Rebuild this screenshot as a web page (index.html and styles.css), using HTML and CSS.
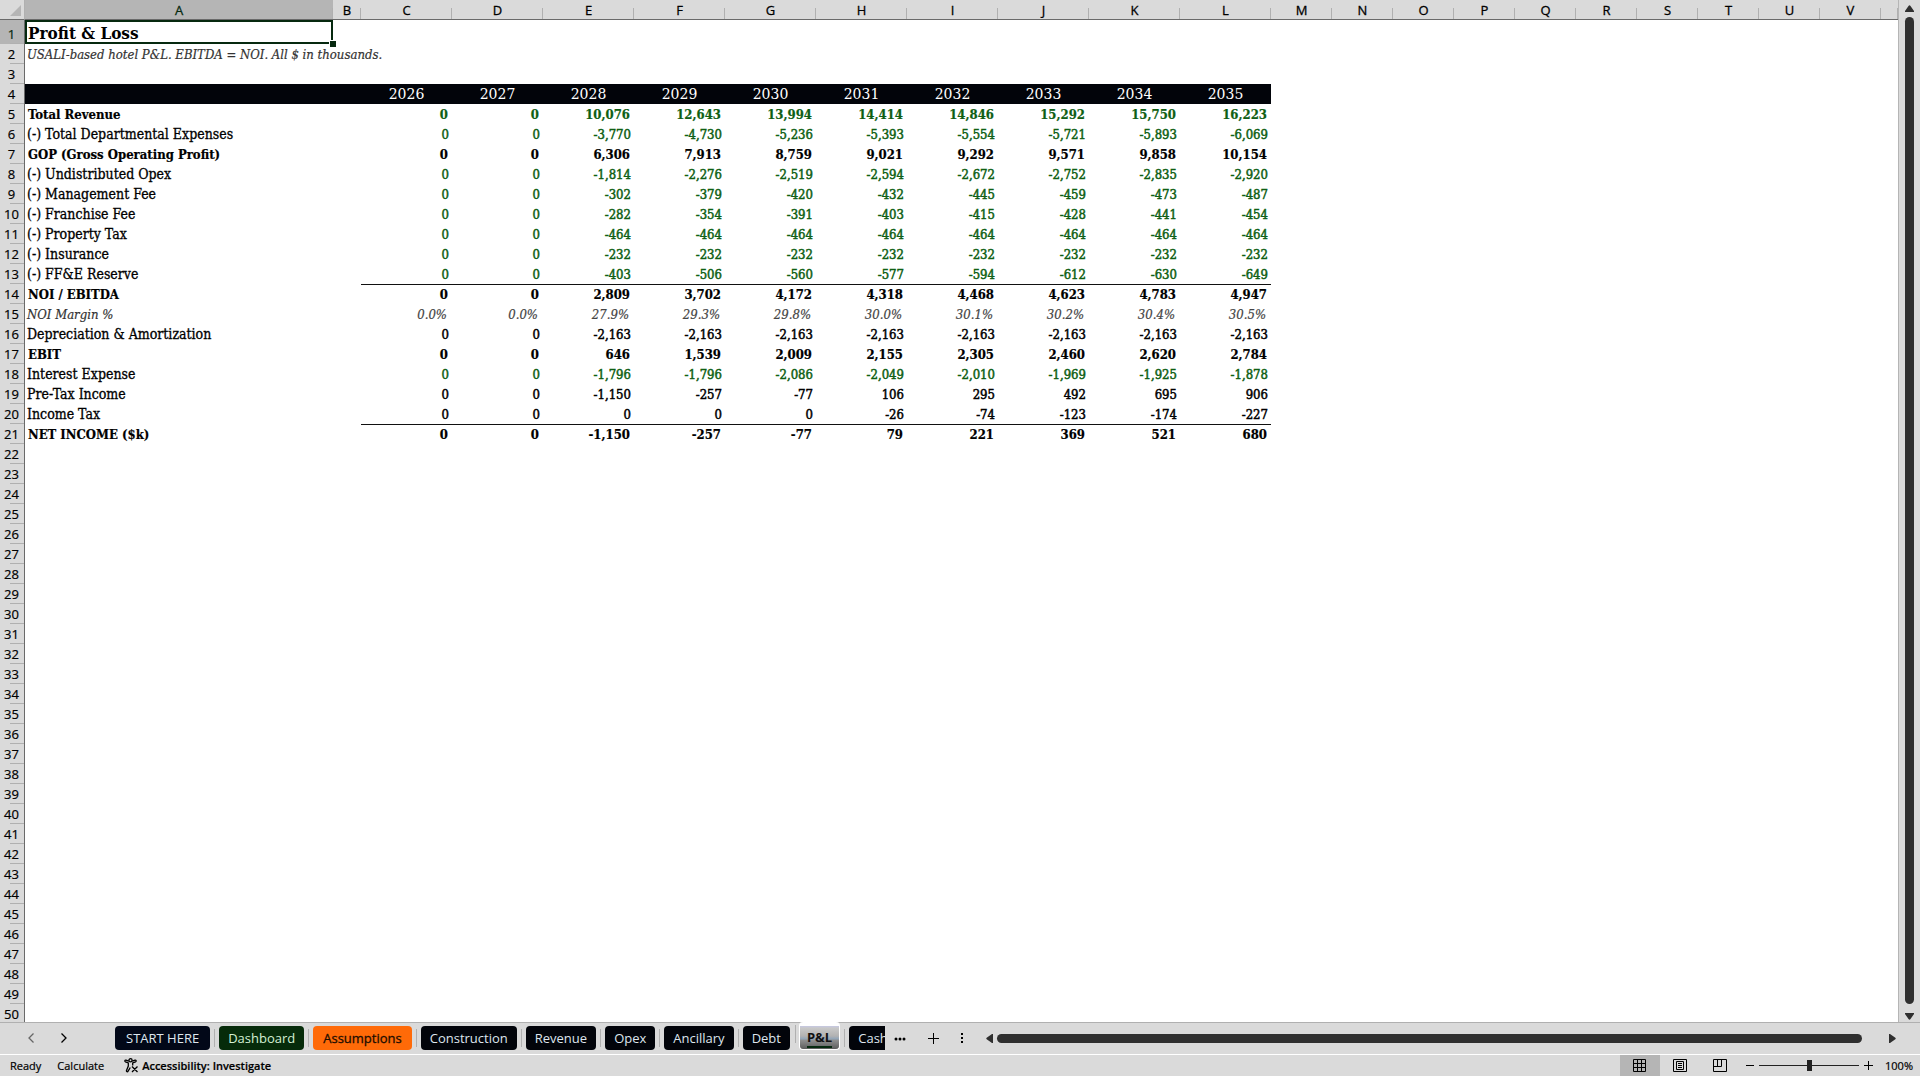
FILE: index.html
```
<!DOCTYPE html>
<html lang="en">
<head>
    <meta charset="UTF-8">
    <title>Profit &amp; Loss</title>
    <link rel="stylesheet" href="styles.css">
</head>
<body>

    <!-- Sheet -->
    <main class="workspace">
        <div class="sheet">
            <table class="grid">
                <colgroup id="cols"></colgroup>
                <thead><tr id="letters"></tr></thead>
                <tbody id="rows"></tbody>
            </table>
        </div>
        <div class="vscroll">
            <svg class="arrow" width="9" height="7" viewBox="0 0 9 7"><path d="M3.500 1q1-1.500 2 0L9 6v1H0V6z"/></svg>
            <div class="vthumb"></div>
            <svg class="arrow" width="9" height="7" viewBox="0 0 9 7"><path d="M0 0h9v1L5.500 6q-1 1.500-2 0L0 1z"/></svg>
        </div>
    </main>

    <!-- Sheet tabs -->
    <nav class="tabbar">
        <div class="tab-arrows">
            <button class="plain dim" aria-label="Previous sheet"><svg width="8" height="12" viewBox="0 0 8 12"><path class="line" d="M6.500 1.500 2 6l4.500 4.500"/></svg></button>
            <button class="plain" aria-label="Next sheet"><svg width="8" height="12" viewBox="0 0 8 12"><path class="line" d="M1.500 1.500 6 6l-4.500 4.500"/></svg></button>
        </div>
        <div class="tabs">
            <button class="tab navy">START HERE</button>
            <button class="tab green">Dashboard</button>
            <button class="tab orange">Assumptions</button>
            <button class="tab">Construction</button>
            <button class="tab">Revenue</button>
            <button class="tab">Opex</button>
            <button class="tab">Ancillary</button>
            <button class="tab">Debt</button>
            <button class="tab active"><span>P&amp;L</span></button>
            <button class="tab">Cash</button>
        </div>
        <div class="tab-tools">
            <button class="plain" aria-label="More sheets"><svg width="12" height="4" viewBox="0 0 12 4"><circle cx="2" cy="2" r="1.500"/><circle cx="6" cy="2" r="1.500"/><circle cx="10" cy="2" r="1.500"/></svg></button>
            <button class="plain" aria-label="New sheet"><svg width="11" height="11" viewBox="0 0 11 11"><path d="M5 0h1v5h5v1H6v5H5V6H0V5h5z"/></svg></button>
            <button class="plain" aria-label="Resize tabs"><svg width="3" height="11" viewBox="0 0 3 11"><path d="M0 0h2v2H0zM0 4h2v2H0zM0 8h2v2H0z"/></svg></button>
        </div>
        <div class="hscroll">
            <svg class="arrow" width="7" height="9" viewBox="0 0 7 9"><path d="M7 0v9H6L1 5.500q-1.500-1 0-2L6 0z"/></svg>
            <div class="hthumb"></div>
            <svg class="arrow" width="7" height="9" viewBox="0 0 7 9"><path d="M0 0h1l5 3.500q1.500 1 0 2L1 9H0z"/></svg>
        </div>
    </nav>

    <!-- Status bar -->
    <footer class="status">
        <span class="state">Ready</span>
        <span class="state">Calculate</span>
        <button class="plain access">
            <svg width="15" height="15" viewBox="0 0 15 15"><circle class="line" cx="6.500" cy="2.300" r="1.600"/><path class="line" d="M4.800 3.200 2 2.200C.8 1.900.4 3.400 1.500 3.900L4.300 5v3L2.500 12.500c-.3 1.300 1 1.700 1.600.7L6.300 9.500M8.200 3.200 11 2.200c1.200-.3 1.600 1.200.5 1.700L8.700 5v2.500M8 8.500l5.500 5.500M13.500 8.500 8 14"/></svg>
            Accessibility: Investigate
        </button>
        <div class="views">
            <button class="view on" aria-label="Normal"><svg width="14" height="14" viewBox="0 0 14 14"><path class="box" d="M.5.5h12v12H.5zM4.500.5v12M8.500.5v12M.5 4.500h12M.5 8.500h12"/></svg></button>
            <button class="view" aria-label="Page layout"><svg width="14" height="14" viewBox="0 0 14 14"><path class="box" d="M.5.5h13v12H.5zM3.500 2.500h7v8h-7zM5 4.500h4M5 6.500h4M5 8.500h4"/></svg></button>
            <button class="view" aria-label="Page break preview"><svg width="14" height="14" viewBox="0 0 14 14"><path class="box" d="M.5.5h13v12H.5zM4.500.5v7M8.500.5v7M.5 7.500h8"/></svg></button>
        </div>
        <div class="zoom">
            <button class="plain" aria-label="Zoom out"><svg width="8" height="9" viewBox="0 0 8 9"><path d="M0 4h8v1H0z"/></svg></button>
            <input type="range" min="0" max="100" value="50" aria-label="Zoom">
            <button class="plain" aria-label="Zoom in"><svg width="9" height="9" viewBox="0 0 9 9"><path d="M4 0h1v4h4v1H5v4H4V5H0V4h4z"/></svg></button>
            <button class="plain percent">100%</button>
        </div>
    </footer>

    <script src="script.js"></script>
</body>
</html>
```
FILE: styles.css
```
* {
    box-sizing: border-box;
}
body {
    margin: 0;
    height: 100vh;
    display: flex;
    flex-direction: column;
    overflow: hidden;
    background: #dadada;
    color: #000;
    font-family: "Open Sans", sans-serif;
    font-size: 13px;
}
button {
    font: inherit;
    color: inherit;
    border: none;
    padding: 0;
    background: none;
}
svg {
    display: block;
    flex: none;
}
.line {
    fill: none;
    stroke: currentColor;
    stroke-width: 1.3;
}
.box {
    fill: none;
    stroke: #000;
}
.arrow {
    fill: #2f2f2f;
}
.plain {
    display: flex;
    align-items: center;
    justify-content: center;
}

/* sheet */
.workspace {
    flex: 1;
    min-height: 0;
    display: flex;
}
.sheet {
    flex: 1;
    min-width: 0;
    overflow: hidden;
    background: #fff;
    border-right: 1px solid #b5b5b5;
}
.grid {
    width: 100%;
    table-layout: fixed;
    border-collapse: separate;
    border-spacing: 0;
}
.grid tr {
    height: 20px;
}
.grid th, .grid td {
    padding: 0;
    line-height: 19px;
    white-space: nowrap;
}
.c-head { width: 25px; }
.c-label { width: 308px; }
.c-gap { width: 28px; }
.c-year { width: 91px; }
.c-empty { width: 61px; }

.grid thead th {
    background: linear-gradient(#b0b0b0, #b0b0b0) right bottom / 1px 11px no-repeat #dadada;
    border-bottom: 1px solid #6a6a6a;
    font-weight: 400;
    line-height: 17px;
    padding-top: 2px;
    -webkit-text-stroke: 0.3px;
}
.grid thead .corner {
    background: #dadada;
    border-right: 1px solid #b0b0b0;
}
.corner svg {
    margin-left: 10px;
    fill: #b5b5b5;
}
.grid thead .picked, .grid tbody .picked {
    background-color: #b5b5b5;
    color: #06290f;
}
.grid tbody th {
    background: linear-gradient(#b0b0b0, #b0b0b0) right bottom / 14px 1px no-repeat #dadada;
    border-right: 1px solid #6a6a6a;
    font-weight: 400;
    padding-top: 1px;
    padding-right: 1px;
    -webkit-text-stroke: 0.2px;
}
.grid td {
    font-family: "DejaVu Serif Condensed", "DejaVu Serif", serif;
    text-align: right;
    padding-right: 3px;
    -webkit-text-stroke: 0.5px;
}
.grid td.label {
    text-align: left;
    padding: 1px 0 0 2px;
    font-size: 14px;
    -webkit-text-stroke: 0.3px;
}
.grid tr.title {
    height: 24px;
}
.grid .title th {
    padding-top: 4px;
}
.grid .title td.label {
    position: relative;
    font-size: 17px;
    font-weight: 700;
    line-height: 22px;
    box-shadow: inset 0 0 0 2px #06290f;
    padding: 2px 0 0 3px;
    -webkit-text-stroke: 0;
}
.title td.label::after {
    content: "";
    position: absolute;
    right: -3px;
    bottom: -3px;
    width: 6px;
    height: 6px;
    background: #06290f;
    border: 1px solid #fff;
    border-width: 1px 0 0 1px;
}
.grid .note td.label, .grid .margin td.label {
    font-size: 13px;
    font-style: italic;
    color: #333;
    padding-top: 0;
    -webkit-text-stroke: 0.2px;
}
.grid .years td {
    font-family: "DejaVu Serif", serif;
    font-size: 14px;
    color: #fff;
    -webkit-text-stroke: 0;
}
.grid .years td.dark {
    background: #02040a;
    text-align: center;
    padding: 0;
}
.grid .total td {
    font-weight: 700;
    padding-right: 4px;
    -webkit-text-stroke: 0.2px;
}
.grid .total td.label {
    font-size: 13px;
    padding: 0 0 0 3px;
}
.grid .margin td {
    font-style: italic;
    color: #444;
    padding-right: 5px;
    -webkit-text-stroke: 0.2px;
}
.linked td.num {
    color: #0f5f14;
}
.ruled td.num {
    border-top: 1px solid #111;
}
.vscroll {
    width: 21px;
    padding: 5px 6px 2px;
    display: flex;
    flex-direction: column;
    align-items: center;
}
.vthumb {
    flex: 1;
    width: 9px;
    margin: 5px 0 9px;
    border-radius: 5px;
    background: #2f2f2f;
}

/* tabs */
.tabbar {
    height: 33px;
    flex: none;
    display: flex;
    align-items: flex-start;
    border-top: 1px solid #b0b0b0;
    border-bottom: 1px solid #fff;
}
.tab-arrows {
    width: 115px;
    flex: none;
    padding: 9px 0 0 27px;
    display: flex;
    gap: 25px;
}
.dim {
    color: #666;
}
.tabs {
    width: 770px;
    display: flex;
    gap: 9px;
    overflow: hidden;
    margin-top: -1px;
}
.tab {
    position: relative;
    flex: none;
    height: 24px;
    margin-top: 4px;
    padding: 0 9px;
    border-radius: 4px;
    background: #02040a;
    color: #dfe6ee;
    line-height: 24px;
}
.tab + .tab::before {
    content: "";
    position: absolute;
    left: -5px;
    top: 3px;
    width: 1px;
    height: 18px;
    background: #b0b0b0;
}
.navy {
    background: #020818;
    padding: 0 11px;
}
.green {
    background: #062b0a;
    color: #d5f0d5;
}
.orange {
    background: #ff6a08;
    color: #1d0d00;
    padding: 0 10px;
    -webkit-text-stroke: 0.3px;
}
.active {
    height: 28px;
    margin-top: 0;
    padding: 4px 7px 0;
    border: 1px solid #fff;
    border-top: none;
    background: linear-gradient(#fff 4px, #c6c8e4 4px, #c8c8c8 6px, #b2b2b2 14px, #8fa4b9 17px, #909090 18px, #5c5c5c 27px);
    color: #111;
    font-weight: 700;
    line-height: 18px;
}
.active span {
    display: block;
    border-bottom: 2px solid #06290f;
}
.tab-tools {
    display: flex;
    align-items: center;
    height: 31px;
    gap: 22px;
    padding: 0 22px 0 9px;
}
.hscroll {
    flex: 1;
    display: flex;
    align-items: center;
    height: 31px;
    padding-right: 24px;
}
.hthumb {
    flex: 1;
    height: 9px;
    margin: 0 27px 0 4px;
    border-radius: 5px;
    background: #2f2f2f;
}

/* status bar */
.status {
    height: 21px;
    flex: none;
    display: flex;
    align-items: center;
    padding-left: 10px;
    font-size: 11px;
    -webkit-text-stroke: 0.2px;
}
.state {
    margin-right: 16px;
}
.access {
    gap: 3px;
    margin-left: 4px;
    font-weight: 600;
}
.views {
    display: flex;
    margin-left: auto;
    align-self: stretch;
}
.view {
    width: 40px;
    display: flex;
    align-items: center;
    justify-content: center;
}
.on {
    background: #b5b5b5;
}
.zoom {
    display: flex;
    align-items: center;
    gap: 5px;
    padding: 0 7px 0 6px;
}
.zoom input {
    appearance: none;
    width: 100px;
    height: 11px;
    margin: 0;
    background: linear-gradient(#222, #222) center / 100% 1px no-repeat;
}
.zoom input::-webkit-slider-thumb {
    appearance: none;
    width: 5px;
    height: 11px;
    background: #222;
}
.percent {
    margin-left: 7px;
}
```
FILE: script.js
```
const letters = 'ABCDEFGHIJKLMNOPQRSTUV'.split('');
const lastRow = 50;

// sheet row -> class, label, values for columns C to L
const data = {
    1: ['title', 'Profit & Loss'],
    2: ['note', 'USALI-based hotel P&L. EBITDA = NOI. All $ in thousands.'],
    4: ['years', '', '2026 2027 2028 2029 2030 2031 2032 2033 2034 2035'],
    5: ['total linked', 'Total Revenue', '0 0 10,076 12,643 13,994 14,414 14,846 15,292 15,750 16,223'],
    6: ['linked', '(-) Total Departmental Expenses', '0 0 -3,770 -4,730 -5,236 -5,393 -5,554 -5,721 -5,893 -6,069'],
    7: ['total', 'GOP (Gross Operating Profit)', '0 0 6,306 7,913 8,759 9,021 9,292 9,571 9,858 10,154'],
    8: ['linked', '(-) Undistributed Opex', '0 0 -1,814 -2,276 -2,519 -2,594 -2,672 -2,752 -2,835 -2,920'],
    9: ['linked', '(-) Management Fee', '0 0 -302 -379 -420 -432 -445 -459 -473 -487'],
    10: ['linked', '(-) Franchise Fee', '0 0 -282 -354 -391 -403 -415 -428 -441 -454'],
    11: ['linked', '(-) Property Tax', '0 0 -464 -464 -464 -464 -464 -464 -464 -464'],
    12: ['linked', '(-) Insurance', '0 0 -232 -232 -232 -232 -232 -232 -232 -232'],
    13: ['linked', '(-) FF&E Reserve', '0 0 -403 -506 -560 -577 -594 -612 -630 -649'],
    14: ['total ruled', 'NOI / EBITDA', '0 0 2,809 3,702 4,172 4,318 4,468 4,623 4,783 4,947'],
    15: ['margin', 'NOI Margin %', '0.0% 0.0% 27.9% 29.3% 29.8% 30.0% 30.1% 30.2% 30.4% 30.5%'],
    16: ['', 'Depreciation & Amortization', '0 0 -2,163 -2,163 -2,163 -2,163 -2,163 -2,163 -2,163 -2,163'],
    17: ['total', 'EBIT', '0 0 646 1,539 2,009 2,155 2,305 2,460 2,620 2,784'],
    18: ['linked', 'Interest Expense', '0 0 -1,796 -1,796 -2,086 -2,049 -2,010 -1,969 -1,925 -1,878'],
    19: ['', 'Pre-Tax Income', '0 0 -1,150 -257 -77 106 295 492 695 906'],
    20: ['', 'Income Tax', '0 0 0 0 0 -26 -74 -123 -174 -227'],
    21: ['total ruled', 'NET INCOME ($k)', '0 0 -1,150 -257 -77 79 221 369 521 680']
};

function add(parent, tag, cls, text) {
    const el = document.createElement(tag);
    if (cls) el.className = cls;
    if (text) el.textContent = text;
    parent.appendChild(el);
    return el;
}

const cols = document.getElementById('cols');
add(cols, 'col', 'c-head');
letters.forEach((l, i) => {
    add(cols, 'col', i === 0 ? 'c-label' : i === 1 ? 'c-gap' : i < 12 ? 'c-year' : 'c-empty');
});
add(cols, 'col');

const head = document.getElementById('letters');
add(head, 'th', 'corner').innerHTML = '<svg width="11" height="11" viewBox="0 0 11 11"><path d="M11 0v11H0z"/></svg>';
letters.forEach((l, i) => add(head, 'th', i === 0 ? 'picked' : '', l));
add(head, 'th');

const body = document.getElementById('rows');
for (let r = 1; r <= lastRow; r++) {
    const [cls, label, list] = data[r] || [''];
    const values = list ? list.split(' ') : [];
    const tr = add(body, 'tr', cls);
    add(tr, 'th', r === 1 ? 'picked' : '', String(r));
    const dark = r === 4 ? ' dark' : '';
    add(tr, 'td', 'label' + dark, label);
    add(tr, 'td', dark);
    for (let i = 0; i < 10; i++) {
        add(tr, 'td', 'num' + dark, values[i]);
    }
    add(tr, 'td').colSpan = 11;
}
```
